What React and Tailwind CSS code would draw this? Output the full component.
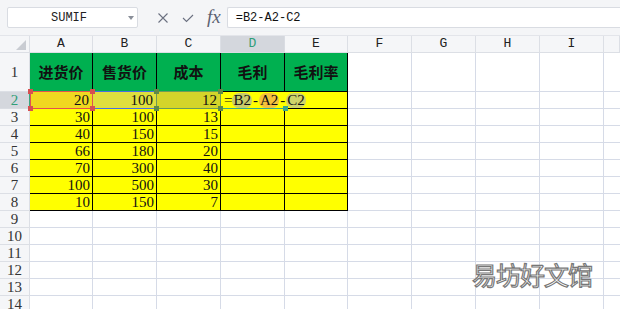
import React from "react";

const cols = ["A", "B", "C", "D", "E", "F", "G", "H", "I", ""];
const data = [
  [30, 100, 13],
  [40, 150, 15],
  [66, 180, 20],
  [70, 300, 40],
  [100, 500, 30],
  [10, 150, 7],
];
const heads = ["进货价", "售货价", "成本", "毛利", "毛利率"];

const serif = { fontFamily: '"Liberation Serif", serif' };

const Handle = ({ className }) => (
  <div className={"absolute w-[5px] h-[5px] z-20 " + className} />
);

const RowHead = ({ n, active }) => (
  <div
    className={
      active
        ? "flex items-center justify-center border-r border-b border-r-[#3aa57f] border-b-[#d9dce2] bg-[#d4d7dd] text-[#2f9e78] text-[15px]"
        : "flex items-center justify-center border-r border-b border-[#dcdfe5] bg-[#f5f6f8] text-[#333] text-[15px]"
    }
    style={serif}
  >
    {n}
  </div>
);

const Blank = ({ last }) => (
  <div className={last ? "border-b border-[#d6dbe7]" : "border-r border-b border-[#d6dbe7]"} />
);

const Num = ({ v }) => (
  <div className="flex items-center justify-end pr-[2px] bg-[#ffff00] border-r border-b border-black text-[15px] text-[#111]" style={serif}>
    {v}
  </div>
);

const Pill = ({ children, className }) => (
  <span className={"inline-flex items-center h-[15px] px-[1px] rounded-[7px] leading-none " + className}>{children}</span>
);

export default function App() {
  return (
    <div className="w-[620px] h-[309px] overflow-hidden bg-white relative">
      {/* formula bar */}
      <div className="h-[36px] bg-[#f4f5f7] flex items-center pl-[7px] border-b border-[#e3e5ea]">
        <div className="w-[131px] h-[21px] bg-white border border-[#d9dce2] rounded-[2px] flex items-center">
          <span className="flex-1 text-center text-[12px] text-[#222] pl-[2px]" style={{ fontFamily: '"Liberation Mono", monospace' }}>
            SUMIF
          </span>
          <svg width="6" height="4" viewBox="0 0 6 4" className="mr-[3px]">
            <path d="M0 0h6L3 4z" fill="#8a8f99" />
          </svg>
        </div>
        <div className="flex items-center ml-[19px] gap-[13px]">
          <svg width="12" height="12" viewBox="0 0 12 12">
            <path d="M1.5 1.5l9 9M10.5 1.5l-9 9" stroke="#6b7080" strokeWidth="1.1" fill="none" />
          </svg>
          <svg width="12" height="10" viewBox="0 0 12 10">
            <path d="M1 5l3.5 3.5L11 2" stroke="#6b7080" strokeWidth="1.1" fill="none" />
          </svg>
          <span className="italic text-[19px] leading-none text-[#5c6272] -mt-[2px]" style={serif}>
            fx
          </span>
        </div>
        <div className="flex-1 ml-[6px] h-[21px] bg-white border-y border-l border-[#d9dce2] rounded-l-[2px] flex items-center pl-[8px] text-[12px] text-[#111]" style={{ fontFamily: '"Liberation Mono", monospace' }}>
          =B2-A2-C2
        </div>
      </div>

      {/* sheet */}
      <div className="grid grid-cols-[30px_63px_64px_64px_64px_63px_64px_64px_64px_64px_1fr] grid-rows-[17px_39px_repeat(13,17px)]">
        {/* column headers */}
        <div className="relative bg-[#f5f6f8] border-r border-b border-[#dcdfe5]">
          <svg width="10" height="10" viewBox="0 0 10 10" className="absolute right-[3px] bottom-[2px]">
            <path d="M10 0V10H0z" fill="#c9ccd2" />
          </svg>
        </div>
        {cols.map((c, i) => (
          <div
            key={"h" + i}
            className={
              c === "D"
                ? "flex items-center justify-center bg-[#d4d7dd] border-r border-b border-[#d9dce2] text-[13px] text-[#2f9e78]"
                : "flex items-center justify-center bg-[#f5f6f8] border-r border-b border-[#dcdfe5] text-[13px] text-[#222]"
            }
            style={{ fontFamily: '"Liberation Mono", monospace' }}
          >
            {c}
          </div>
        ))}

        {/* row 1 */}
        <RowHead n={1} />
        {heads.map((h) => (
          <div
            key={h}
            className="flex items-center justify-center bg-[#00b050] border-r border-b border-black text-[15px] font-bold text-[#111]"
            style={{ fontFamily: '"Noto Sans CJK SC", sans-serif' }}
          >
            {h}
          </div>
        ))}
        {[0, 1, 2, 3, 4].map((i) => (
          <Blank key={"r1" + i} last={i === 4} />
        ))}

        {/* row 2 - formula references highlighted */}
        <RowHead n={2} active />
        <div className="relative flex items-center justify-end pr-[3px] bg-[#f0d820] border-r border-b border-black text-[15px] text-[#111]" style={serif}>
          <div className="absolute -top-px left-0 right-[-1px] bottom-[-1px] border border-[#e05252]" />
          <Handle className="bg-[#d65050] -left-[2px] -top-[3px]" />
          <Handle className="bg-[#d65050] -left-[2px] -bottom-[3px]" />
          <Handle className="bg-[#d65050] -right-[3px] -top-[3px]" />
          <Handle className="bg-[#d65050] -right-[3px] -bottom-[3px]" />
          <span className="relative">20</span>
        </div>
        <div className="relative flex items-center justify-end pr-[3px] bg-[#dfdf3e] border-r border-b border-black text-[15px] text-[#111]" style={serif}>
          <div className="absolute -top-px left-0 right-0 h-px bg-[#4c6ee0]" />
          <div className="absolute -bottom-px left-0 right-0 h-px bg-[#4c6ee0]" />
          <span className="relative">100</span>
        </div>
        <div className="relative flex items-center justify-end pr-[3px] bg-[#d4d42a] border-r border-b border-black text-[15px] text-[#111]" style={serif}>
          <div className="absolute -top-px left-[-1px] right-[-1px] bottom-[-1px] border border-[#6f9a58]" />
          <Handle className="bg-[#5f8a48] -left-[3px] -top-[3px]" />
          <Handle className="bg-[#5f8a48] -left-[3px] -bottom-[3px]" />
          <Handle className="bg-[#5f8a48] -right-[3px] -top-[3px]" />
          <Handle className="bg-[#5f8a48] -right-[3px] -bottom-[3px]" />
          <span className="relative">12</span>
        </div>
        <div className="relative z-10 flex items-center pl-[3px] bg-[#ffff00] border-b border-black text-[15px] text-[#111] whitespace-nowrap" style={serif}>
          <div className="absolute -bottom-px left-0 right-0 h-px bg-[#3aa88a]" />
          <div className="absolute -bottom-[3px] -right-[3px] w-[5px] h-[5px] bg-[#3aa88a]" />
          <span>=</span>
          <Pill className="bg-[#c8cc6a]">B2</Pill>
          <span className="px-[1px]">-</span>
          <Pill className="bg-[#f4c23c]">A2</Pill>
          <span className="px-[1px]">-</span>
          <Pill className="bg-[#cfd36a]">C2</Pill>
        </div>
        <div className="bg-[#ffff00] border-r border-b border-black" />
        {[0, 1, 2, 3, 4].map((i) => (
          <Blank key={"r2" + i} last={i === 4} />
        ))}

        {/* rows 3-8 */}
        {data.map((row, r) => (
          <React.Fragment key={"d" + r}>
            <RowHead n={r + 3} />
            {row.map((v, c) => (
              <Num key={c} v={v} />
            ))}
            <div className="bg-[#ffff00] border-r border-b border-black" />
            <div className="bg-[#ffff00] border-r border-b border-black" />
            {[0, 1, 2, 3, 4].map((i) => (
              <Blank key={i} last={i === 4} />
            ))}
          </React.Fragment>
        ))}

        {/* empty rows */}
        {[9, 10, 11, 12, 13, 14, 15].map((n) => (
          <React.Fragment key={"e" + n}>
            <RowHead n={n} />
            {[0, 1, 2, 3, 4, 5, 6, 7, 8, 9].map((i) => (
              <Blank key={i} last={i === 9} />
            ))}
          </React.Fragment>
        ))}
      </div>

      {/* watermark */}
      <div
        className="absolute left-[472px] top-[262px] text-[25px] leading-none text-white tracking-[-1px] [-webkit-text-stroke:1.2px_#777] pointer-events-none"
        style={{ fontFamily: '"Noto Sans CJK SC", sans-serif' }}
      >
        易坊好文馆
      </div>
    </div>
  );
}
